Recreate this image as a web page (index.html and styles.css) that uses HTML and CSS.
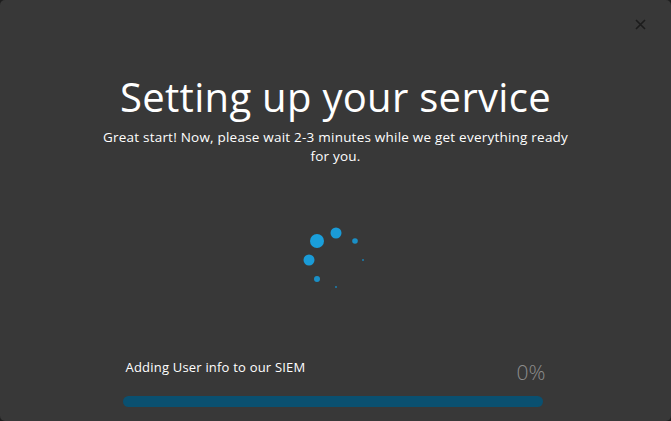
FILE: index.html
```html
<!DOCTYPE html>
<html lang="en">
<head>
  <meta charset="UTF-8" />
  <meta name="viewport" content="width=device-width, initial-scale=1.0"/>
  <title>Setting up your service</title>
  <link rel="stylesheet" href="styles.css">
</head>
<body>

  <div class="modal">
    <!-- tombol tutup -->
    <button class="close" aria-label="Close">
      <svg width="11" height="11" viewBox="0 0 11 11">
        <path d="M1 1 L10 10 M10 1 L1 10" stroke="#1c1c1c" stroke-width="1.6" fill="none"/>
      </svg>
    </button>

    <div class="content">
      <h1>Setting up your service</h1>
      <p class="sub">Great start! Now, please wait 2-3 minutes while we get everything ready for you.</p>

      <!-- spinner titik -->
      <svg class="spinner" width="70" height="70" viewBox="0 0 70 70">
        <circle cx="35" cy="8" r="5.5" fill="#1a9bd7"/>
        <circle cx="54" cy="16" r="2.8" fill="#1a8fc6"/>
        <circle cx="62" cy="35" r="1" fill="#1a7fb0"/>
        <circle cx="35" cy="62" r="1" fill="#1a7fb0"/>
        <circle cx="16" cy="54" r="3" fill="#1a8fc6"/>
        <circle cx="8" cy="35" r="5.5" fill="#1a9bd7"/>
        <circle cx="16" cy="16" r="7" fill="#1a9fdb"/>
      </svg>

      <div class="progress">
        <div class="progress-head">
          <span class="label">Adding User info to our SIEM</span>
          <span class="pct">0%</span>
        </div>
        <div class="bar"></div>
      </div>
    </div>
  </div>

</body>
</html>
```

FILE: styles.css
```css
body {
  margin: 0;
  background: #1e1e1e;
  font-family: 'Open Sans', sans-serif;
  color: white;
  overflow: hidden;
}

.modal {
  position: relative;
  height: 421px;
  background-color: #383838;
  border-radius: 5px;
}

.close {
  position: absolute;
  top: 18px;
  right: 25px;
  padding: 0;
  border: none;
  background: none;
  cursor: pointer;
}

.content {
  display: flex;
  flex-direction: column;
  align-items: center;
  padding-top: 73px;
}

.content h1 {
  margin: 0;
  font-size: 40px;
  font-weight: 400;
  line-height: 48px;
  letter-spacing: 0.3px;
}

.sub {
  width: 470px;
  margin: 7px 0 0;
  font-size: 13.5px;
  line-height: 18.5px;
  letter-spacing: 0.22px;
  text-align: center;
}

.spinner {
  margin-top: 60px;
}

.progress {
  width: 420px;
  margin-top: 63px;
  margin-right: 6px;
}

.progress-head {
  display: flex;
  justify-content: space-between;
  align-items: flex-end;
}

.label {
  padding-left: 3px;
  font-size: 13px;
  letter-spacing: 0.2px;
  margin-bottom: 10px;
}

.pct {
  margin-right: -3px;
  font-size: 21px;
  color: #8c8c8c;
  font-weight: 300;
}

.bar {
  height: 11px;
  margin-top: 10px;
  border-radius: 6px;
  background-color: #0a5070;
}
```
